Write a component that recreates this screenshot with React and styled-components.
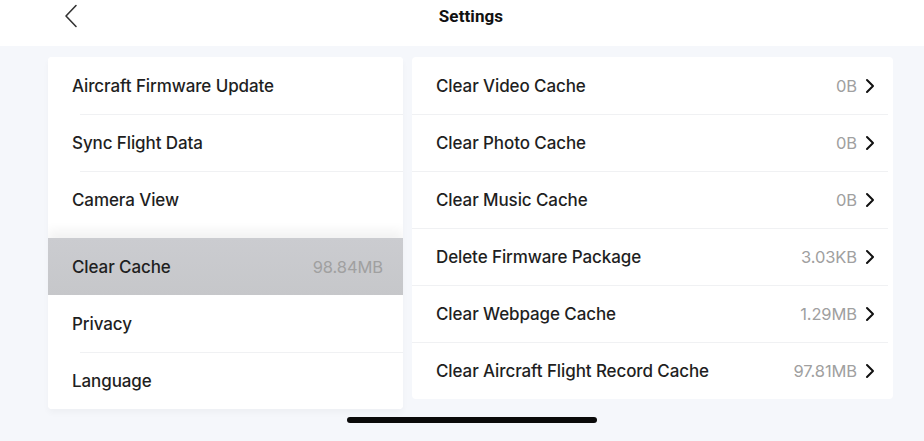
import React from "react";
import styled, { createGlobalStyle } from "styled-components";

const GlobalStyle = createGlobalStyle`
  html, body {
    margin: 0;
    padding: 0;
    background: #f5f7fb;
    font-family: Inter, Roboto, "Liberation Sans", Arial, sans-serif;
  }
`;

const leftGroups = [
  [
    { label: "Aircraft Firmware Update" },
    { label: "Sync Flight Data" },
    { label: "Camera View" },
  ],
  [
    { label: "Clear Cache", value: "98.84MB", active: true },
    { label: "Privacy" },
    { label: "Language" },
  ],
];

const cacheItems = [
  { label: "Clear Video Cache", value: "0B" },
  { label: "Clear Photo Cache", value: "0B" },
  { label: "Clear Music Cache", value: "0B" },
  { label: "Delete Firmware Package", value: "3.03KB" },
  { label: "Clear Webpage Cache", value: "1.29MB" },
  { label: "Clear Aircraft Flight Record Cache", value: "97.81MB" },
];

const Chevron = () => (
  <svg width="10" height="16" viewBox="0 0 10 16">
    <polyline points="2,2 8,8 2,14" fill="none" stroke="#111" strokeWidth="2" strokeLinecap="round" strokeLinejoin="round" />
  </svg>
);

const BackIcon = () => (
  <svg width="14" height="24" viewBox="0 0 14 24">
    <polyline points="12,1.5 2,12 12,22.5" fill="none" stroke="#333" strokeWidth="1.6" strokeLinecap="round" strokeLinejoin="round" />
  </svg>
);

const App = () => {
  return (
    <>
      <GlobalStyle />
      <Page>
        <Header>
          <BackButton>
            <BackIcon />
          </BackButton>
          <Title>Settings</Title>
        </Header>
        <Body>
          <LeftCard>
            {leftGroups.map((group, gi) => (
              <Group key={gi}>
                {group.map((item) => (
                  <LeftRow key={item.label} $active={item.active}>
                    <Label>{item.label}</Label>
                    {item.value && <Value>{item.value}</Value>}
                  </LeftRow>
                ))}
              </Group>
            ))}
          </LeftCard>
          <RightCard>
            {cacheItems.map((item) => (
              <RightRow key={item.label}>
                <Label>{item.label}</Label>
                <Trail>
                  <Value>{item.value}</Value>
                  <Chevron />
                </Trail>
              </RightRow>
            ))}
          </RightCard>
        </Body>
        <HomeIndicator />
      </Page>
    </>
  );
};

export default App;

const Page = styled.div`
  position: relative;
  width: 924px;
  height: 441px;
  overflow: hidden;
  background: #f5f7fb;
`;

const Header = styled.div`
  position: relative;
  height: 46px;
  background: #fff;
  display: flex;
  align-items: flex-start;
  justify-content: center;
`;

const BackButton = styled.div`
  position: absolute;
  left: 64px;
  top: 4px;
  display: flex;
`;

const Title = styled.div`
  margin-top: 6px;
  margin-left: 18px;
  font-family: Roboto, "Liberation Sans", Arial, sans-serif;
  font-size: 17px;
  font-weight: 700;
  color: #111;
  letter-spacing: 0.1px;
`;

const Body = styled.div`
  display: flex;
  gap: 9px;
  padding: 11px 31px 0 48px;
`;

const LeftCard = styled.div`
  width: 355px;
  display: flex;
  flex-direction: column;
  background: #fff;
  border-radius: 4px;
  overflow: hidden;
  box-shadow: 0 4px 6px rgba(0, 0, 0, 0.03);
`;

const Group = styled.div`
  display: flex;
  flex-direction: column;

  & + & {
    margin-top: 10px;
  }
`;

const LeftRow = styled.div`
  position: relative;
  height: 57px;
  display: flex;
  align-items: center;
  justify-content: space-between;
  padding: 0 20px 0 24px;
  background: ${(p) => (p.$active ? "linear-gradient(#cbccd0, #c6c7ca)" : "#fff")};
  box-shadow: ${(p) => (p.$active ? "0 -8px 10px rgba(0,0,0,0.05)" : "none")};

  & + &::before {
    content: "";
    position: absolute;
    top: 0;
    left: 32px;
    right: 0;
    height: 1px;
    background: #f0f1f3;
  }
`;

const RightCard = styled.div`
  flex: 1;
  align-self: flex-start;
  display: flex;
  flex-direction: column;
  background: #fff;
  border-radius: 4px;
`;

const RightRow = styled.div`
  position: relative;
  height: 57px;
  display: flex;
  align-items: center;
  justify-content: space-between;
  padding: 0 18px 0 24px;

  & + &::before {
    content: "";
    position: absolute;
    top: 0;
    left: 0;
    right: 5px;
    height: 1px;
    background: #f0f1f3;
  }
`;

const Label = styled.span`
  font-size: 17px;
  font-weight: 500;
  color: #1f1f1f;
  letter-spacing: -0.1px;
`;

const Value = styled.span`
  font-size: 16.5px;
  color: #a0a0a0;
  letter-spacing: -0.1px;
`;

const Trail = styled.div`
  display: flex;
  align-items: center;
  gap: 8px;
`;

const HomeIndicator = styled.div`
  position: absolute;
  left: 347px;
  top: 417px;
  width: 250px;
  height: 6px;
  border-radius: 3px;
  background: #0a0a0a;
`;
